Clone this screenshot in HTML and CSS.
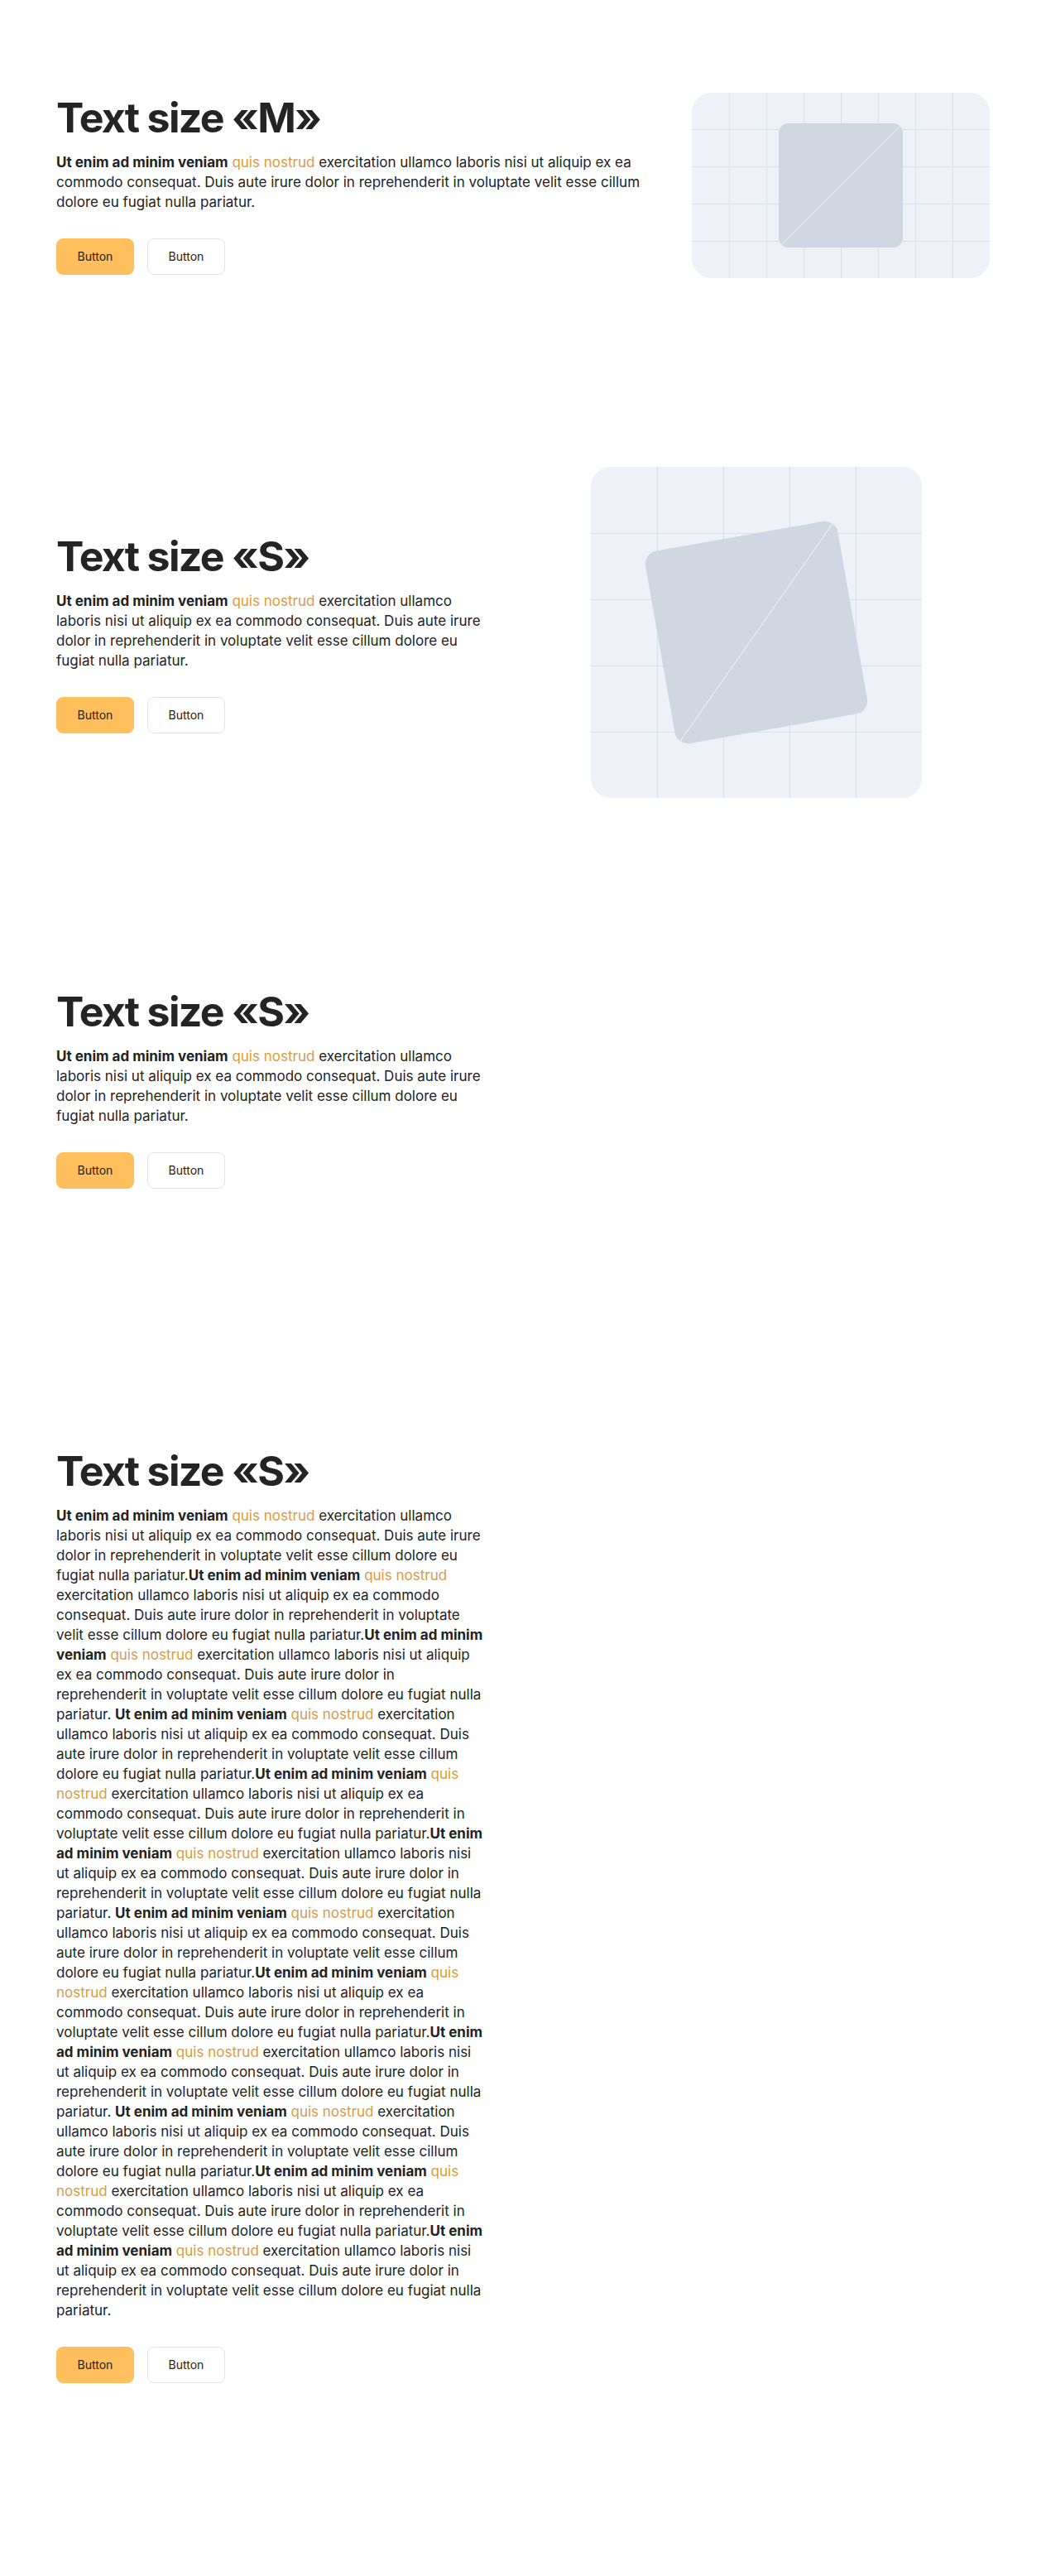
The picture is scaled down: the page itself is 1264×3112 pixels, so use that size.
FILE: index.html
```html
<!DOCTYPE html>
<html lang="en">
<head>
<meta charset="utf-8">
<title>Text sizes</title>
<link rel="stylesheet" href="styles.css">
</head>
<body>
<main class="page">

  <section class="section section--m">
    <div class="text-block text-block--m">
      <h2 class="title">Text size «M»</h2>
      <p class="lead"><b>Ut enim ad minim veniam</b> <span class="accent">quis nostrud</span> exercitation ullamco laboris nisi ut aliquip ex ea commodo consequat. Duis aute irure dolor in reprehenderit in voluptate velit esse cillum dolore eu fugiat nulla pariatur.</p>
      <div class="actions">
        <button class="btn btn--primary" type="button">Button</button>
        <button class="btn btn--outline" type="button">Button</button>
      </div>
    </div>
    <div class="media-col">
      <svg class="media" width="360" height="224" viewBox="0 0 360 224" aria-hidden="true">
        <defs>
          <clipPath id="frame1"><rect width="360" height="224" rx="24"/></clipPath>
          <clipPath id="sq1"><rect x="105" y="37" width="150" height="150" rx="12"/></clipPath>
        </defs>
        <g clip-path="url(#frame1)">
          <rect width="360" height="224" fill="#eef1f8"/>
          <path d="M45.5 0V224M90.5 0V224M135.5 0V224M180.5 0V224M225.5 0V224M270.5 0V224M315.5 0V224M0 44.5H360M0 89.5H360M0 134.5H360M0 179.5H360" stroke="#dce0eb" stroke-width="1" fill="none"/>
        </g>
        <rect x="105" y="37" width="150" height="150" rx="12" fill="#d0d7e3"/>
        <line x1="105" y1="187" x2="255" y2="37" stroke="#eef1f8" stroke-width="1" clip-path="url(#sq1)"/>
      </svg>
    </div>
  </section>

  <section class="section section--s">
    <div class="text-block">
      <h2 class="title">Text size «S»</h2>
      <p class="lead"><b>Ut enim ad minim veniam</b> <span class="accent">quis nostrud</span> exercitation ullamco laboris nisi ut aliquip ex ea commodo consequat. Duis aute irure dolor in reprehenderit in voluptate velit esse cillum dolore eu fugiat nulla pariatur.</p>
      <div class="actions">
        <button class="btn btn--primary" type="button">Button</button>
        <button class="btn btn--outline" type="button">Button</button>
      </div>
    </div>
    <div class="media-col media-col--center">
      <svg class="media" width="400" height="400" viewBox="0 0 400 400" aria-hidden="true">
        <defs>
          <clipPath id="frame2"><rect width="400" height="400" rx="24"/></clipPath>
          <clipPath id="sq2"><rect x="82" y="82" width="236" height="236" rx="16"/></clipPath>
        </defs>
        <g clip-path="url(#frame2)">
          <rect width="400" height="400" fill="#eef1f8"/>
          <path d="M80.5 0V400M160.5 0V400M240.5 0V400M320.5 0V400M0 80.5H400M0 160.5H400M0 240.5H400M0 320.5H400" stroke="#dce0eb" stroke-width="1.2" fill="none"/>
        </g>
        <g transform="rotate(-10 200 200)">
          <rect x="82" y="82" width="236" height="236" rx="16" fill="#d0d7e3"/>
          <line x1="82" y1="318" x2="318" y2="82" stroke="#eef1f8" stroke-width="1" clip-path="url(#sq2)"/>
        </g>
      </svg>
    </div>
  </section>

  <section class="section section--plain section--spaced">
    <div class="text-block">
      <h2 class="title">Text size «S»</h2>
      <p class="lead"><b>Ut enim ad minim veniam</b> <span class="accent">quis nostrud</span> exercitation ullamco laboris nisi ut aliquip ex ea commodo consequat. Duis aute irure dolor in reprehenderit in voluptate velit esse cillum dolore eu fugiat nulla pariatur.</p>
      <div class="actions">
        <button class="btn btn--primary" type="button">Button</button>
        <button class="btn btn--outline" type="button">Button</button>
      </div>
    </div>
  </section>

  <section class="section section--plain">
    <div class="text-block">
      <h2 class="title">Text size «S»</h2>
      <p class="lead"><b>Ut enim ad minim veniam</b> <span class="accent">quis nostrud</span> exercitation ullamco laboris nisi ut aliquip ex ea commodo consequat. Duis aute irure dolor in reprehenderit in voluptate velit esse cillum dolore eu fugiat nulla pariatur.<b>Ut enim ad minim veniam</b> <span class="accent">quis nostrud</span> exercitation ullamco laboris nisi ut aliquip ex ea commodo consequat. Duis aute irure dolor in reprehenderit in voluptate velit esse cillum dolore eu fugiat nulla pariatur.<b>Ut enim ad minim veniam</b> <span class="accent">quis nostrud</span> exercitation ullamco laboris nisi ut aliquip ex ea commodo consequat. Duis aute irure dolor in reprehenderit in voluptate velit esse cillum dolore eu fugiat nulla pariatur. <b>Ut enim ad minim veniam</b> <span class="accent">quis nostrud</span> exercitation ullamco laboris nisi ut aliquip ex ea commodo consequat. Duis aute irure dolor in reprehenderit in voluptate velit esse cillum dolore eu fugiat nulla pariatur.<b>Ut enim ad minim veniam</b> <span class="accent">quis nostrud</span> exercitation ullamco laboris nisi ut aliquip ex ea commodo consequat. Duis aute irure dolor in reprehenderit in voluptate velit esse cillum dolore eu fugiat nulla pariatur.<b>Ut enim ad minim veniam</b> <span class="accent">quis nostrud</span> exercitation ullamco laboris nisi ut aliquip ex ea commodo consequat. Duis aute irure dolor in reprehenderit in voluptate velit esse cillum dolore eu fugiat nulla pariatur. <b>Ut enim ad minim veniam</b> <span class="accent">quis nostrud</span> exercitation ullamco laboris nisi ut aliquip ex ea commodo consequat. Duis aute irure dolor in reprehenderit in voluptate velit esse cillum dolore eu fugiat nulla pariatur.<b>Ut enim ad minim veniam</b> <span class="accent">quis nostrud</span> exercitation ullamco laboris nisi ut aliquip ex ea commodo consequat. Duis aute irure dolor in reprehenderit in voluptate velit esse cillum dolore eu fugiat nulla pariatur.<b>Ut enim ad minim veniam</b> <span class="accent">quis nostrud</span> exercitation ullamco laboris nisi ut aliquip ex ea commodo consequat. Duis aute irure dolor in reprehenderit in voluptate velit esse cillum dolore eu fugiat nulla pariatur. <b>Ut enim ad minim veniam</b> <span class="accent">quis nostrud</span> exercitation ullamco laboris nisi ut aliquip ex ea commodo consequat. Duis aute irure dolor in reprehenderit in voluptate velit esse cillum dolore eu fugiat nulla pariatur.<b>Ut enim ad minim veniam</b> <span class="accent">quis nostrud</span> exercitation ullamco laboris nisi ut aliquip ex ea commodo consequat. Duis aute irure dolor in reprehenderit in voluptate velit esse cillum dolore eu fugiat nulla pariatur.<b>Ut enim ad minim veniam</b> <span class="accent">quis nostrud</span> exercitation ullamco laboris nisi ut aliquip ex ea commodo consequat. Duis aute irure dolor in reprehenderit in voluptate velit esse cillum dolore eu fugiat nulla pariatur.</p>
      <div class="actions">
        <button class="btn btn--primary" type="button">Button</button>
        <button class="btn btn--outline" type="button">Button</button>
      </div>
    </div>
  </section>

</main>
</body>
</html>
```

FILE: styles.css
```css
* {
  box-sizing: border-box;
}

html, body {
  margin: 0;
  padding: 0;
  background: #ffffff;
}

body {
  font-family: Inter, "Noto Sans", "Liberation Sans", sans-serif;
  color: #222222;
  -webkit-font-smoothing: antialiased;
}

.page {
  display: flex;
  flex-direction: column;
  min-height: 3112px;
}

.section {
  display: grid;
  padding: 112px 68px 116px;
  align-items: center;
}

.section--m {
  grid-template-columns: 720px 1fr;
  column-gap: 48px;
}

.section--s {
  grid-template-columns: 520px 1fr;
  column-gap: 44px;
}

.section--plain {
  grid-template-columns: 520px;
  align-items: start;
}

.section--spaced {
  padding-bottom: 199px;
}

.text-block {
  display: flex;
  flex-direction: column;
  align-items: flex-start;
}

.text-block--m {
  align-self: start;
}

.title {
  margin: 0 0 12px;
  font-size: 50px;
  line-height: 60px;
  font-weight: 700;
  color: #242424;
  letter-spacing: -1.7px;
}

.lead {
  margin: 0 0 32px;
  font-size: 17px;
  line-height: 24px;
  font-weight: 400;
  color: #222222;
}

.lead b {
  font-weight: 700;
}

.accent {
  color: #d99b43;
}

.actions {
  display: flex;
  gap: 16px;
}

.btn {
  font-family: inherit;
  font-size: 14px;
  line-height: 20px;
  font-weight: 400;
  color: #222222;
  height: 44px;
  min-width: 94px;
  padding: 0 24px;
  border-radius: 8px;
  border: 1px solid transparent;
  background: none;
  cursor: pointer;
}

.btn--primary {
  background: #ffbf5c;
  border-color: #ffbf5c;
}

.btn--outline {
  background: #ffffff;
  border-color: #e4e4e7;
}

.media-col {
  display: flex;
  justify-content: flex-end;
}

.media-col--center {
  justify-content: center;
}

.media {
  display: block;
}
```
